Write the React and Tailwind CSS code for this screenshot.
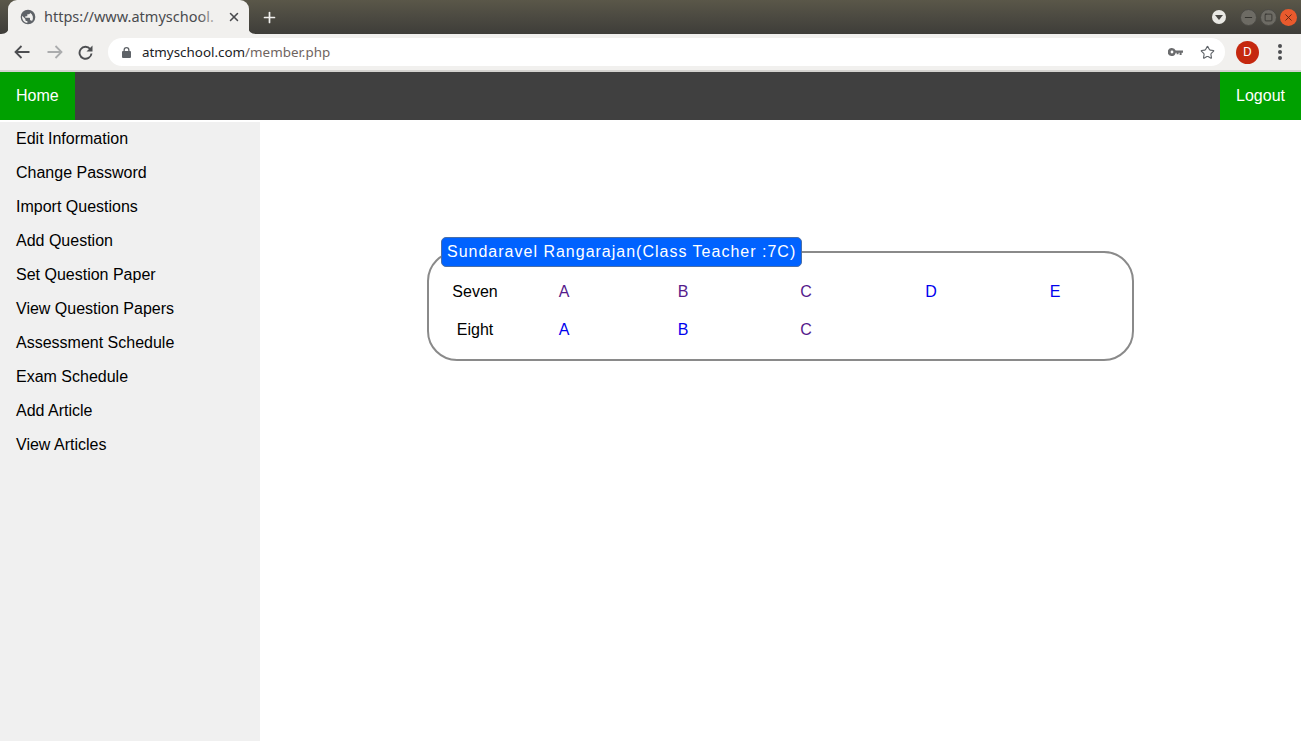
import React from 'react';
import { Plus, X, Star, Minus, Square } from 'lucide-react';

const menuItems = [
  'Edit Information',
  'Change Password',
  'Import Questions',
  'Add Question',
  'Set Question Paper',
  'View Question Papers',
  'Assessment Schedule',
  'Exam Schedule',
  'Add Article',
  'View Articles',
];

const visited = 'text-[#551a8b]';
const fresh = 'text-[#0000ee]';

const classRows = [
  { name: 'Seven', sections: [['A', visited], ['B', visited], ['C', visited], ['D', fresh], ['E', fresh]] },
  { name: 'Eight', sections: [['A', fresh], ['B', fresh], ['C', visited]] },
];

function TabCorner({ flip }) {
  return (
    <svg width="8" height="8" viewBox="0 0 8 8" className={flip ? 'self-end -scale-x-100' : 'self-end'}>
      <path d="M8 0V8H0C5 8 8 5 8 0Z" fill="#f1f0ee" />
    </svg>
  );
}

function WindowButton({ className, children }) {
  return (
    <div className={`flex h-[17px] w-[17px] items-center justify-center rounded-full ${className}`}>
      {children}
    </div>
  );
}

function BrowserChrome() {
  return (
    <div className="font-['Noto_Sans',sans-serif]">
      {/* tab strip */}
      <div className="flex h-[34px] bg-gradient-to-b from-[#5a5749] to-[#3e3d39]">
        <div className="w-px" />
        <TabCorner />
        <div className="relative -mx-px flex h-[34px] w-[241px] items-center rounded-t-[9px] bg-[#f1f0ee] pl-[12px]">
          <svg width="16" height="16" viewBox="0 0 24 24" className="shrink-0">
            <path
              fill="#5f6368"
              d="M12 1a11 11 0 1 0 0 22 11 11 0 0 0 0-22Zm-1 19.9A9 9 0 0 1 3.2 10L8 15v1c0 1.1.9 2 2 2h1v2.9Zm6.9-2.5A2 2 0 0 0 16 17h-1v-3c0-.6-.4-1-1-1H8v-2h2c.6 0 1-.4 1-1V8h2a2 2 0 0 0 2-2v-.4a9 9 0 0 1 2.9 12.8Z"
            />
          </svg>
          <span className="ml-[8px] whitespace-nowrap text-[14.5px] text-[#4a4b4e]">https://www.atmyschool.</span>
          <div className="absolute left-[190px] top-0 h-full w-[26px] bg-gradient-to-r from-transparent to-[#f1f0ee]" />
          <X size={14} strokeWidth={2.6} className="absolute right-[8px] top-[10px] text-[#4a4b4e]" />
        </div>
        <TabCorner flip />
        <Plus size={17} strokeWidth={2.4} className="ml-[5px] mt-[9px] text-[#f1f0ee]" />
        <div className="ml-auto mr-[4px] flex items-center gap-[3px]">
          <div className="mr-[11px] flex h-[14px] w-[14px] items-center justify-center rounded-full bg-[#e9e8e4]">
            <div className="h-0 w-0 border-x-[4px] border-t-[5px] border-x-transparent border-t-[#4a4945]" />
          </div>
          <WindowButton className="bg-[#6d6b64] border border-[#4a4944]">
            <Minus size={11} strokeWidth={2} className="text-[#2f2e2a]" />
          </WindowButton>
          <WindowButton className="bg-[#6d6b64] border border-[#4a4944]">
            <Square size={9} strokeWidth={2} className="text-[#2f2e2a]" />
          </WindowButton>
          <WindowButton className="bg-[#e95a2d]">
            <X size={11} strokeWidth={2} className="text-[#5c2413]" />
          </WindowButton>
        </div>
      </div>

      {/* address bar */}
      <div className="flex h-[38px] items-center border-b-2 border-[#d4d3d0] bg-[#f1f0ee]">
        <svg width="16" height="14" viewBox="0 0 16 14" fill="none" stroke="#4d4e51" strokeWidth="1.8" className="ml-[14px]">
          <path d="M15.5 7H1.5M7.5 1L1.5 7L7.5 13" />
        </svg>
        <svg width="16" height="14" viewBox="0 0 16 14" fill="none" stroke="#abacad" strokeWidth="1.8" className="ml-[17px]">
          <path d="M0.5 7H14.5M8.5 1L14.5 7L8.5 13" />
        </svg>
        <svg width="15" height="15" viewBox="0 0 15 15" className="ml-[15px]">
          <path d="M12.2 4A6 6 0 1 0 13.5 8.5" fill="none" stroke="#4d4e51" strokeWidth="1.9" />
          <path d="M14.5 0.5V6.5H8.5Z" fill="#4d4e51" />
        </svg>
        <div className="ml-[15px] flex h-[28px] w-[1117px] items-center rounded-full bg-white pl-[14px]">
          <svg width="9" height="11" viewBox="0 0 9 11">
            <path
              fill="#5f6368"
              fillRule="evenodd"
              d="M1.5 4V3a3 3 0 0 1 6 0v1H8a1 1 0 0 1 1 1v5a1 1 0 0 1-1 1H1a1 1 0 0 1-1-1V5a1 1 0 0 1 1-1h.5ZM2.8 4h3.4V3a1.7 1.7 0 0 0-3.4 0v1Z"
            />
          </svg>
          <span className="ml-[11px] text-[13.4px] text-[#202124]">
            atmyschool.com<span className="text-[#6f6460]">/member.php</span>
          </span>
          <svg width="15" height="8" viewBox="0 0 15 8" className="ml-auto">
            <path
              fill="#6b6c6e"
              fillRule="evenodd"
              d="M4 0a4 4 0 0 1 3.7 2.5H15v2.2h-1.4V7h-2V4.7h-1V6.2h-2V4.7h-.9A4 4 0 1 1 4 0Zm0 2.6a1.4 1.4 0 1 0 0 2.8 1.4 1.4 0 0 0 0-2.8Z"
            />
          </svg>
          <Star size={15} strokeWidth={1.8} className="ml-[17px] mr-[10px] text-[#5f6368]" />
        </div>
        <div className="ml-[11px] flex h-[23px] w-[23px] items-center justify-center rounded-full bg-[#c5280f] text-[12px] text-white">
          D
        </div>
        <div className="ml-[19px] flex flex-col gap-[2.5px]">
          <div className="h-[3.5px] w-[3.5px] rounded-full bg-[#4d4e51]" />
          <div className="h-[3.5px] w-[3.5px] rounded-full bg-[#4d4e51]" />
          <div className="h-[3.5px] w-[3.5px] rounded-full bg-[#4d4e51]" />
        </div>
      </div>
    </div>
  );
}

function ClassCard() {
  return (
    <div className="relative ml-[167px] mt-[129px] h-[110px] w-[707px] rounded-[30px] border-2 border-[#8a8a8a] pt-[20px]">
      <div className="absolute left-[12px] top-[-16px] h-[30px] rounded-[5px] border border-[#4a6fa8] bg-[#0062ff] px-[5px] text-[16px] leading-[28px] tracking-[1px] whitespace-nowrap text-white">
        Sundaravel Rangarajan(Class Teacher :7C)
      </div>
      {classRows.map((row) => (
        <div key={row.name} className="grid h-[38px] grid-cols-[75px_120px_118px_128px_122px_126px] items-center">
          <span className="w-[92px] text-center text-black">{row.name}</span>
          {row.sections.map(([label, color]) => (
            <a key={label} className={`text-center ${color}`}>
              {label}
            </a>
          ))}
        </div>
      ))}
    </div>
  );
}

export default function App() {
  return (
    <div className="flex h-[741px] w-[1301px] flex-col overflow-hidden bg-white font-['Liberation_Sans',Arial,sans-serif] text-[16px]">
      <BrowserChrome />
      <div className="flex h-[48px] justify-between bg-[#404040] text-white">
        <div className="flex items-center bg-[#00a000] px-[16px]">Home</div>
        <div className="flex items-center bg-[#00a000] px-[16px]">Logout</div>
      </div>
      <div className="flex flex-1 pt-[2px]">
        <div className="w-[260px] bg-[#f0f0f0]">
          {menuItems.map((item) => (
            <div key={item} className="flex h-[34px] items-center pl-[16px] text-black">
              {item}
            </div>
          ))}
        </div>
        <div className="flex-1">
          <ClassCard />
        </div>
      </div>
    </div>
  );
}
